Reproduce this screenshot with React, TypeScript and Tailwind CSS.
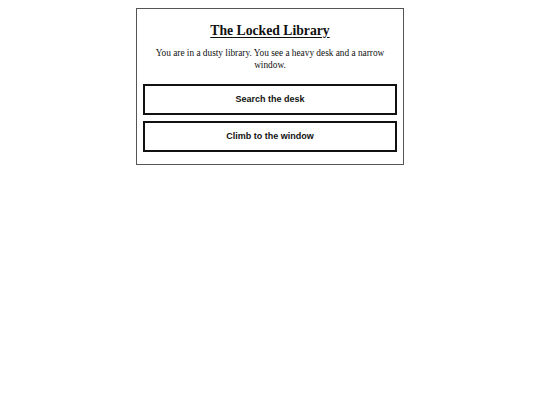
import { useState } from "react"

type Choice = {
    id: string
    label: string
}

const choices: Choice[] = [
    { id: "desk", label: "Search the desk" },
    { id: "window", label: "Climb to the window" },
]

const App = () => {
    const [picked, setPicked] = useState<string | null>(null)

    return (
        <div className="min-h-screen bg-white pt-2">
            <div className="mx-auto w-[268px] border border-[#555] bg-white px-[6px] pt-[12px] pb-[12px] text-center">
                <h1 className="font-['Liberation_Serif',serif] text-[13.7px] font-bold leading-[20px] text-[#111] underline underline-offset-2">
                    The Locked Library
                </h1>
                <p className="mx-auto mt-[6px] max-w-[236px] font-['Liberation_Serif',serif] text-[9.3px] leading-[12px] text-[#111]">
                    You are in a dusty library. You see a heavy desk and a narrow window.
                </p>
                <div className="mt-[13px] flex flex-col gap-[6px]">
                    {choices.map((c) => (
                        <button
                            key={c.id}
                            onClick={() => setPicked(c.id)}
                            className={`h-[31px] w-full border-2 border-[#111] font-['Liberation_Sans',sans-serif] text-[9px] font-bold text-[#111] ${picked === c.id ? "bg-gray-100" : "bg-white"}`}
                        >
                            {c.label}
                        </button>
                    ))}
                </div>
            </div>
        </div>
    )
}

export default App
